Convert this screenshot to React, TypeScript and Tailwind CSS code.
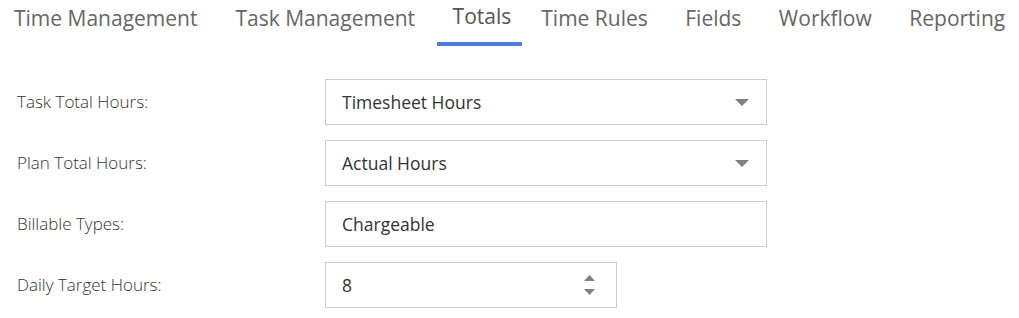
import React from 'react';

const tabs = ['Time Management', 'Task Management', 'Totals', 'Time Rules', 'Fields', 'Workflow', 'Reporting'];

function Caret({ up = false, small = false }: { up?: boolean; small?: boolean }) {
  const w = small ? 11 : 14;
  const h = small ? 6 : 7;
  return (
    <svg width={w} height={h} viewBox={`0 0 ${w} ${h}`} className="fill-[#808080]">
      {up ? <path d={`M0 ${h} L${w / 2} 0 L${w} ${h} Z`} /> : <path d={`M0 0 L${w} 0 L${w / 2} ${h} Z`} />}
    </svg>
  );
}

function Row({ label, children }: { label: string; children: React.ReactNode }) {
  return (
    <div className="flex items-center">
      <div className="w-[325px] pl-[17px] text-[17px] font-light text-[#333]">{label}</div>
      {children}
    </div>
  );
}

export default function App() {
  return (
    <div className="w-[1019px] h-[318px] bg-white font-['Open_Sans',sans-serif] overflow-hidden">
      <div className="flex h-[47px]">
        {tabs.map((t, i) => {
          const active = t === 'Totals';
          const pad = i === 0 ? 'pl-[14px] pr-[19px]' : active ? 'pl-[19px] pr-[11px]' : 'pl-[19px] pr-[18.5px]';
          return (
            <div
              key={t}
              className={`relative flex items-start text-[21px] whitespace-nowrap ${active ? 'pt-[1px] text-[#555]' : 'pt-[3px] text-[#666]'} ${pad}`}
            >
              {t}
              {active && <div className="absolute left-[3px] right-[0px] top-[42px] h-[4px] bg-[#4f7fd4]" />}
            </div>
          );
        })}
      </div>

      <div className="flex flex-col gap-[15px] pt-[32px]">
        <Row label="Task Total Hours:">
          <div className="flex items-center justify-between w-[442px] h-[46px] border border-[#cccccc] pl-[16px] pr-[17px] text-[17.5px] text-[#333]">
            <span>Timesheet Hours</span>
            <Caret />
          </div>
        </Row>
        <Row label="Plan Total Hours:">
          <div className="flex items-center justify-between w-[442px] h-[46px] border border-[#cccccc] pl-[16px] pr-[17px] text-[17.5px] text-[#333]">
            <span>Actual Hours</span>
            <Caret />
          </div>
        </Row>
        <Row label="Billable Types:">
          <div className="flex items-center w-[442px] h-[46px] border border-[#cccccc] pl-[16px] text-[17.5px] text-[#333]">
            Chargeable
          </div>
        </Row>
        <Row label="Daily Target Hours:">
          <div className="flex items-center justify-between w-[292px] h-[46px] border border-[#cccccc] pl-[16px] pr-[21px] text-[17.5px] text-[#333]">
            <span>8</span>
            <div className="flex flex-col gap-[8px]">
              <Caret up small />
              <Caret small />
            </div>
          </div>
        </Row>
      </div>
    </div>
  );
}
